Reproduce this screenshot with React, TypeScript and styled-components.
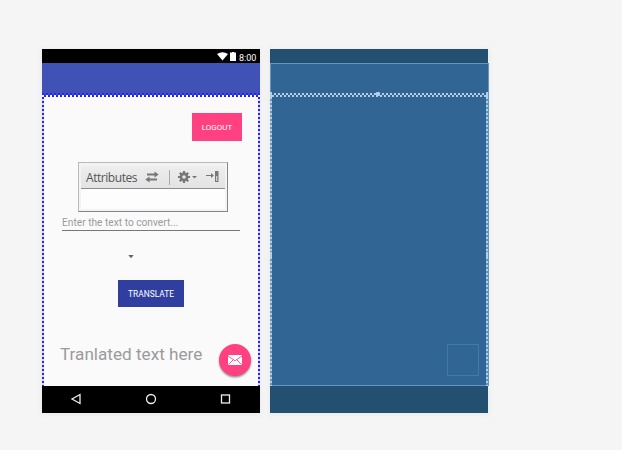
import React from "react";
import styled, { createGlobalStyle } from "styled-components";

const GlobalStyle = createGlobalStyle`
  * { box-sizing: border-box; }
  body { margin: 0; background: #f5f5f5; font-family: Roboto, "Liberation Sans", sans-serif; overflow: hidden; }
`;

const Surface = styled.main`
  display: flex;
  gap: 10px;
  width: 622px;
  height: 450px;
  padding: 49px 0 0 42px;
  background: #f5f5f5;
`;

const Device = styled.section`
  display: flex;
  flex-direction: column;
  width: 218px;
  height: 364px;
  box-shadow: 0 1px 6px 2px rgba(0, 0, 0, 0.035);
`;

const StatusBar = styled.header<{ $color: string }>`
  display: flex;
  align-items: flex-start;
  justify-content: flex-end;
  height: 14px;
  padding: 3px 3px 0 0;
  background: ${(p) => p.$color};
  color: #fff;
`;

const Clock = styled.span`
  width: 18px;
  margin-left: 3px;
  padding-top: 1px;
  font-size: 9px;
  line-height: 10px;
  white-space: nowrap;
`;

const AppBar = styled.div`
  height: 32px;
  background: #4052b5;
`;

const Content = styled.div`
  position: relative;
  display: flex;
  flex-direction: column;
  height: 291px;
  padding: 18px 18px 0;
  background: #fafafa;
`;

const Button = styled.button<{ $color: string; $width: number; $height: number }>`
  width: ${(p) => p.$width}px;
  height: ${(p) => p.$height}px;
  padding: 1px 0 0;
  border: 0;
  background: ${(p) => p.$color};
  color: #fff;
  font: 400 8px/10px Roboto, sans-serif;
  white-space: nowrap;
`;

const LogoutButton = styled(Button)`
  align-self: flex-end;
`;

const TranslateButton = styled(Button)`
  margin: 21px 0 0 58px;
  font-size: 8.4px;
`;

const Attributes = styled.div`
  display: flex;
  flex-direction: column;
  width: 150px;
  height: 50px;
  margin: 21px 0 0 18px;
  padding: 3px 2px 2px;
  border: 1px solid;
  border-color: #b9b9b9 #858585 #858585 #b9b9b9;
  background: #f3f3f3;
`;

const AttributesHeader = styled.div`
  display: flex;
  align-items: center;
  height: 23px;
  padding-left: 5px;
  border-bottom: 1px solid #8d8d8d;
  background: linear-gradient(#eeeeee, #e3e3e3);
`;

const AttributesTitle = styled.span`
  width: 59px;
  padding-top: 2px;
  color: #555;
  font: 12px/16px "Open Sans", sans-serif;
  letter-spacing: -0.45px;
`;

const AttributesBody = styled.div`
  flex: 1;
  background: #fdfdfd;
`;

const Field = styled.div`
  width: 178px;
  height: 19px;
  margin-left: 2px;
  padding-top: 5px;
  border-bottom: 1px solid #777;
  color: #9b9b9b;
  font-size: 10.2px;
  line-height: 12px;
  white-space: nowrap;
`;

const Spinner = styled.div`
  display: flex;
  height: 28px;
  padding: 24px 0 0 68px;
`;

const ResultRow = styled.div`
  display: flex;
  margin-top: 37px;
`;

const Result = styled.span`
  flex: none;
  width: 159px;
  height: 20px;
  color: #9a9a9a;
  font-size: 17.15px;
  line-height: 20px;
  white-space: nowrap;
`;

const Fab = styled.button`
  display: flex;
  align-items: center;
  justify-content: center;
  flex: none;
  width: 32px;
  height: 32px;
  padding: 0;
  border: 0;
  border-radius: 50%;
  background: #ff4081;
  box-shadow: 0 1.5px 2px rgba(0, 0, 0, 0.42);
`;

const NavBar = styled.footer<{ $color: string }>`
  display: flex;
  align-items: center;
  justify-content: space-between;
  height: 27px;
  padding: 0 28px 1px;
  background: ${(p) => p.$color};
`;

const Blueprint = styled.div`
  position: relative;
  height: 323px;
  background: #316593;
`;

const Outline = styled.div`
  position: absolute;
  inset: 0 -1px 0 0;
  border: 1px solid #6097c3;
`;

const FabOutline = styled.div`
  position: absolute;
  left: 177px;
  top: 281px;
  width: 32px;
  height: 32px;
  border: 1px solid #4079aa;
`;

const Selection = styled.svg<{ $top: number }>`
  position: absolute;
  left: 0;
  top: ${(p) => p.$top}px;
  width: 218px;
  height: 293px;
  overflow: visible;
`;

const Icon = styled.svg<{ $gap?: number }>`
  flex: none;
  margin-left: ${(p) => p.$gap ?? 0}px;
`;

function SelectionMarks({ color, back, top }: { color: string; back: string; top: number }) {
  return (
    <Selection $top={top} viewBox="0 0 218 293" shapeRendering="crispEdges">
      <g fill="none" strokeWidth="2">
        <path d="M1 4V293M217 4V293" stroke={back} />
        <path d="M1 4V293M217 4V293" stroke={color} strokeDasharray="2 2" />
        <path d="M0 1H218" stroke={color} strokeDasharray="2 2" />
        <path d="M2 3H218" stroke={color} strokeDasharray="2 2" />
      </g>
    </Selection>
  );
}

export default function App() {
  return (
    <>
      <GlobalStyle />
      <Surface>
        <Device>
          <StatusBar $color="#000">
            <Icon width="11" height="9" viewBox="0 0 11 9"><path d="M0 2Q5.5-1.6 11 2L5.5 8.6Z" fill="#fff" /></Icon>
            <Icon $gap={2} width="6" height="9" viewBox="0 0 6 9"><path d="M0 .5H2V0H4V.5H6V9H0Z" fill="#fff" /></Icon>
            <Clock>8:00</Clock>
          </StatusBar>
          <AppBar />
          <Content>
            <LogoutButton $color="#ff4081" $width={50} $height={28}>LOGOUT</LogoutButton>
            <Attributes>
              <AttributesHeader>
                <AttributesTitle>Attributes</AttributesTitle>
                <Icon width="14" height="12" viewBox="0 0 14 12">
                  <path d="M2 3.5H10M4 8.5H12" stroke="#777" strokeWidth="1.8" />
                  <path d="M9.5 .5L13.7 3.5 9.5 6.5ZM4.5 5.5L.3 8.5 4.5 11.5Z" fill="#777" />
                </Icon>
                <Icon $gap={10} width="1" height="15"><path d="M.5 0V15" stroke="#aaa" /></Icon>
                <Icon $gap={8} width="20" height="12" viewBox="0 0 20 12">
                  <g stroke="#777" fill="none">
                    <circle cx="6" cy="6" r="3.1" strokeWidth="2.6" />
                    <path d="M6 0V3M6 9V12M0 6H3M9 6H12M1.8 1.8L4 4M8 8L10.2 10.2M1.8 10.2L4 8M8 4L10.2 1.8" strokeWidth="2.2" />
                  </g>
                  <path d="M14 5H19L16.5 7.5Z" fill="#777" />
                </Icon>
                <Icon $gap={8} width="13" height="12" viewBox="0 0 13 12">
                  <path d="M0 4.5H6" stroke="#777" />
                  <path d="M5 2L8 4.5 5 7Z" fill="#777" />
                  <path d="M9 0H12.5V11H9Z" fill="#777" />
                  <path d="M10.75 5V10" stroke="#eee" />
                </Icon>
              </AttributesHeader>
              <AttributesBody />
            </Attributes>
            <Field>Enter the text to convert...</Field>
            <Spinner>
              <Icon width="6" height="4" viewBox="0 0 6 4"><path d="M.3 0H5.7L3 3.2Z" fill="#666" /></Icon>
            </Spinner>
            <TranslateButton $color="#303f9f" $width={66} $height={27}>TRANSLATE</TranslateButton>
            <ResultRow>
              <Result>Tranlated text here</Result>
              <Fab aria-label="Mail">
                <Icon width="14" height="10" viewBox="0 0 14 10">
                  <rect width="14" height="10" rx="1" fill="#fff" />
                  <path d="M0 1L7 5.7 14 1M.8 9.3L5 5M13.2 9.3L9 5" fill="none" stroke="#ff4081" strokeWidth=".9" />
                </Icon>
              </Fab>
            </ResultRow>
            <SelectionMarks color="#2323fa" back="#d7d7ff" top={-2} />
          </Content>
          <NavBar $color="#000">
            <Icon width="12" height="12" viewBox="0 0 12 12"><path d="M10 1.5V10.5L2 6Z" fill="none" stroke="#eee" strokeWidth="1.3" /></Icon>
            <Icon width="12" height="12" viewBox="0 0 12 12"><circle cx="6" cy="6" r="4.5" fill="none" stroke="#eee" strokeWidth="1.3" /></Icon>
            <Icon width="12" height="12" viewBox="0 0 12 12"><rect x="1.5" y="2" width="8" height="8" fill="none" stroke="#eee" strokeWidth="1.3" /></Icon>
          </NavBar>
        </Device>
        <Device>
          <StatusBar $color="#234f70" />
          <Blueprint>
            <Outline />
            <FabOutline />
            <SelectionMarks color="#b5cde1" back="#6096c0" top={30} />
            <Selection $top={30} viewBox="0 0 218 293" fill="#b5cfe8">
              <rect x="106" y="-1" width="4" height="4" rx="1" />
              <rect x="0" y="159" width="2" height="5" />
              <rect x="216" y="159" width="2" height="5" />
              <rect x="0" y="-1" width="2" height="5" />
              <rect x="216" y="-1" width="2" height="5" />
            </Selection>
          </Blueprint>
          <NavBar $color="#234f70" />
        </Device>
      </Surface>
    </>
  );
}
